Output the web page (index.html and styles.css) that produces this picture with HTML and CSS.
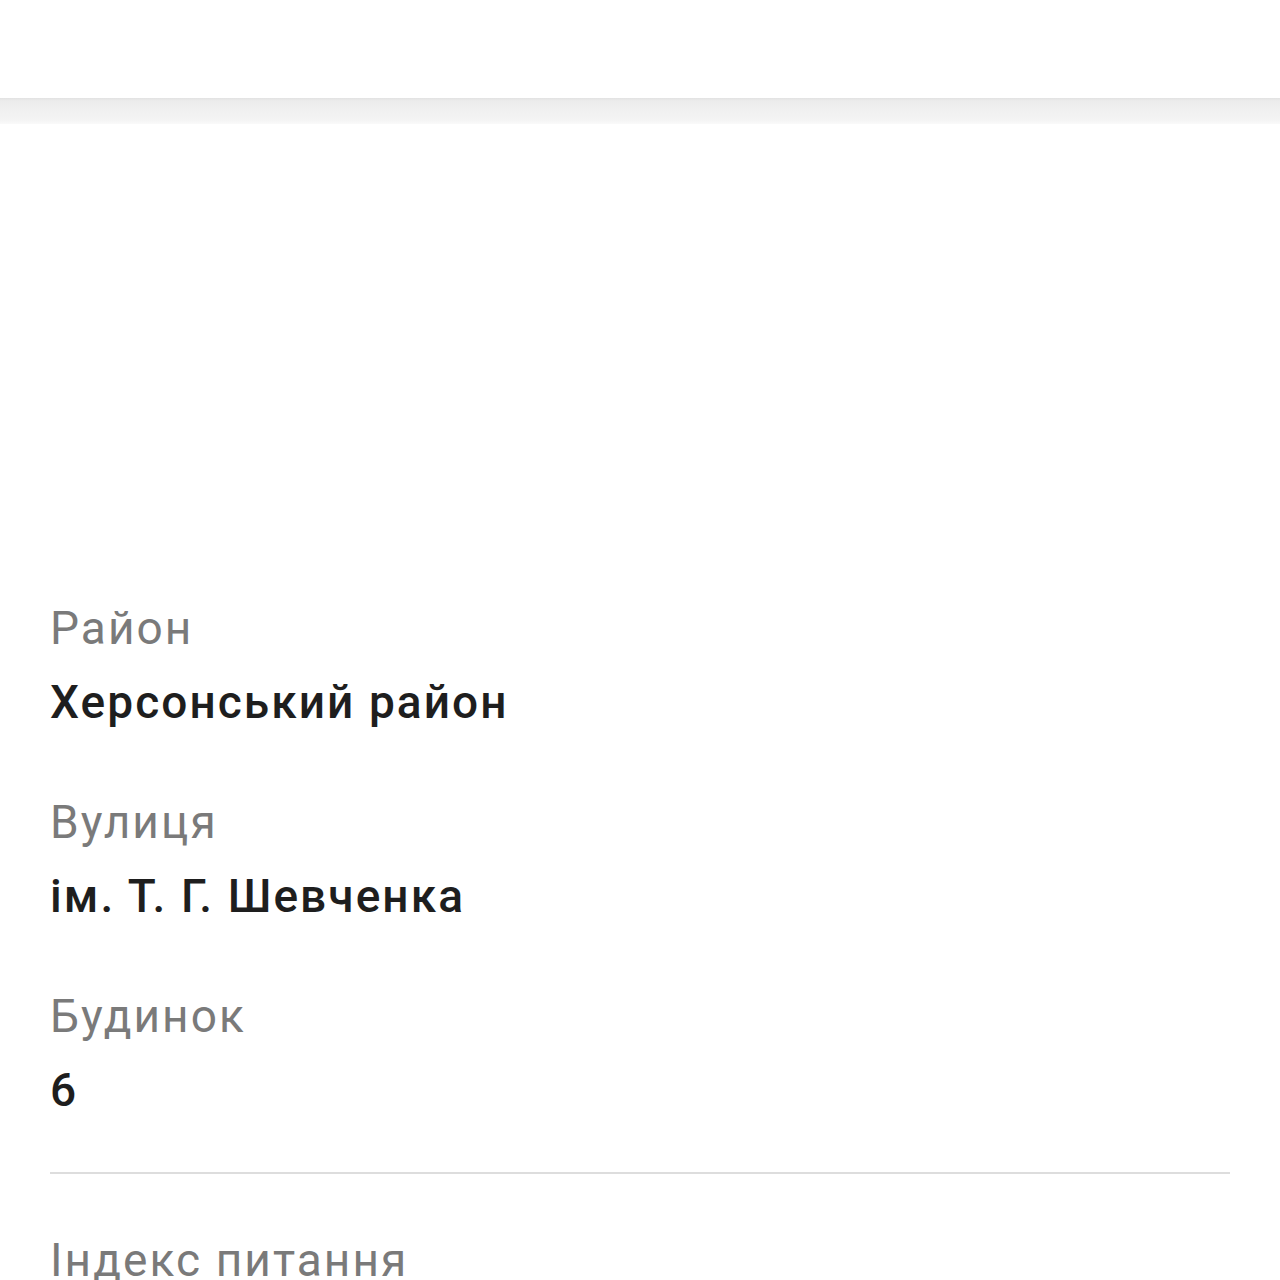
FILE: index.html
```html
<!DOCTYPE html>
<html lang="uk">
<head>
<meta charset="utf-8">
<link rel="stylesheet" href="styles.css">
</head>
<body>
<header class="appbar"></header>
<div class="appbar-shadow"></div>
<main class="content">
  <div class="field">
    <div class="label">Район</div>
    <div class="value">Херсонський район</div>
  </div>
  <div class="field">
    <div class="label">Вулиця</div>
    <div class="value">ім. Т. Г. Шевченка</div>
  </div>
  <div class="field">
    <div class="label">Будинок</div>
    <div class="value">6</div>
  </div>
  <hr class="divider">
  <div class="field">
    <div class="label">Індекс питання</div>
  </div>
</main>
</body>
</html>
```
FILE: styles.css
```css
html, body {
  margin: 0;
  padding: 0;
  background: #ffffff;
  font-family: Roboto, "Noto Sans", "Liberation Sans", sans-serif;
}
body {
  height: 1280px;
  overflow: hidden;
}
.appbar {
  height: 98px;
  background: #ffffff;
}
.appbar-shadow {
  height: 26px;
  background: linear-gradient(#e2e2e2 0px, #ececec 3px, #f1f1f1 14px, #f4f4f4 22px, #fafafa 26px);
}
.content {
  padding: 474px 50px 0 50px;
  display: flex;
  flex-direction: column;
}
.field {
  display: flex;
  flex-direction: column;
  gap: 14px;
  margin-bottom: 60px;
}
.label {
  font-size: 46px;
  line-height: 60px;
  letter-spacing: 0.045em;
  color: #7a7a7a;
  font-weight: 400;
  white-space: nowrap;
}
.value {
  font-size: 46px;
  line-height: 60px;
  letter-spacing: 0.045em;
  color: #1e1e1e;
  font-weight: 500;
  white-space: nowrap;
}
.divider {
  border: 0;
  height: 2px;
  background: #dddddd;
  margin: -8px 0 56px 0;
}
```
